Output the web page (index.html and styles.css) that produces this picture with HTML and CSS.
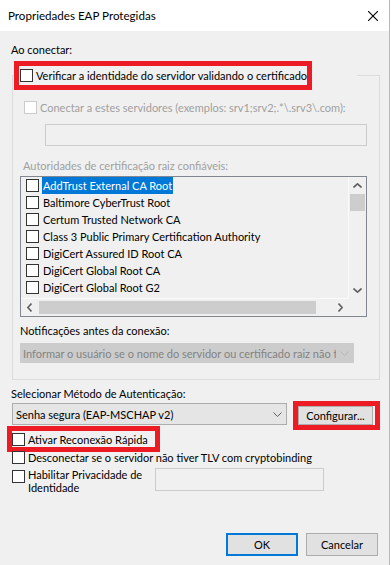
FILE: index.html
```html
<!DOCTYPE html>
<html lang="pt-BR">
<head>
    <meta charset="UTF-8">
    <title>Propriedades EAP Protegidas</title>
    <link rel="stylesheet" href="styles.css">
</head>
<body>
    <div class="dialog">
        <div class="titlebar">
            <span>Propriedades EAP Protegidas</span>
            <svg class="close" width="10" height="10" viewBox="0 0 10 10">
                <path d="M0 0L10 10M10 0L0 10" stroke="#000" stroke-width="1.1" fill="none"/>
            </svg>
        </div>

        <div class="content">
            <div class="label top-label">Ao conectar:</div>

            <fieldset class="group">
                <legend class="legend">
                    <div class="highlight verify">
                        <span class="check"></span>
                        <span>Verificar a identidade do servidor validando o certificado</span>
                    </div>
                </legend>

                <div class="check-row servers disabled">
                    <span class="check check-disabled"></span>
                    <span>Conectar a estes servidores (exemplos: srv1;srv2;.*\.srv3\.com):</span>
                </div>
                <div class="textbox servers-input"></div>

                <div class="label ca-label disabled">Autoridades de certificação raiz confiáveis:</div>
                <div class="listbox">
                    <div class="list-main">
                        <div class="list-items">
                            <div class="item"><span class="check"></span><span class="item-text selected">AddTrust External CA Root</span></div>
                            <div class="item"><span class="check"></span><span class="item-text">Baltimore CyberTrust Root</span></div>
                            <div class="item"><span class="check"></span><span class="item-text">Certum Trusted Network CA</span></div>
                            <div class="item"><span class="check"></span><span class="item-text">Class 3 Public Primary Certification Authority</span></div>
                            <div class="item"><span class="check"></span><span class="item-text">DigiCert Assured ID Root CA</span></div>
                            <div class="item"><span class="check"></span><span class="item-text">DigiCert Global Root CA</span></div>
                            <div class="item"><span class="check"></span><span class="item-text">DigiCert Global Root G2</span></div>
                        </div>
                        <div class="vscroll">
                            <div class="arrow"><svg width="9" height="5" viewBox="0 0 9 5"><polyline points="0.5,4.5 4.5,0.8 8.5,4.5" fill="none" stroke="#606060" stroke-width="1.6"/></svg></div>
                            <div class="vthumb"></div>
                            <div class="spacer"></div>
                            <div class="arrow"><svg width="9" height="5" viewBox="0 0 9 5"><polyline points="0.5,0.5 4.5,4.2 8.5,0.5" fill="none" stroke="#606060" stroke-width="1.6"/></svg></div>
                        </div>
                    </div>
                    <div class="hscroll">
                        <div class="arrow"><svg width="5" height="9" viewBox="0 0 5 9"><polyline points="4.5,0.5 0.8,4.5 4.5,8.5" fill="none" stroke="#606060" stroke-width="1.6"/></svg></div>
                        <div class="hthumb"></div>
                        <div class="spacer"></div>
                        <div class="arrow"><svg width="5" height="9" viewBox="0 0 5 9"><polyline points="0.5,0.5 4.2,4.5 0.5,8.5" fill="none" stroke="#606060" stroke-width="1.6"/></svg></div>
                        <div class="corner"></div>
                    </div>
                </div>

                <div class="label notify-label">Notificações antes da conexão:</div>
                <div class="combo combo-disabled">
                    <span class="combo-text">Informar o usuário se o nome do servidor ou certificado raiz não tiver</span>
                    <span class="chevron"><svg width="9" height="5" viewBox="0 0 9 5"><polyline points="0.5,0.5 4.5,4.5 8.5,0.5" fill="none" stroke="#b5b5b5" stroke-width="1"/></svg></span>
                </div>
            </fieldset>

            <div class="label method-label">Selecionar Método de Autenticação:</div>
            <div class="method-row">
                <div class="combo method-combo">
                    <span class="combo-text">Senha segura (EAP-MSCHAP v2)</span>
                    <span class="chevron"><svg width="9" height="5" viewBox="0 0 9 5"><polyline points="0.5,0.5 4.5,4.5 8.5,0.5" fill="none" stroke="#606060" stroke-width="1"/></svg></span>
                </div>
                <div class="highlight config-box">
                    <button class="button config">Configurar...</button>
                </div>
            </div>

            <div class="highlight fast">
                <span class="check"></span>
                <span>Ativar Reconexão Rápida</span>
            </div>
            <div class="check-row disconnect">
                <span class="check"></span>
                <span>Desconectar se o servidor não tiver TLV com cryptobinding</span>
            </div>
            <div class="privacy">
                <span class="check"></span>
                <span class="privacy-label">Habilitar Privacidade de<br>Identidade</span>
                <div class="textbox privacy-input"></div>
            </div>

            <div class="buttons">
                <button class="button default">OK</button>
                <button class="button">Cancelar</button>
            </div>
        </div>
    </div>
</body>
</html>
```
FILE: styles.css
```css
body {
    margin: 0;
    background-color: #fff;
    font-family: Lato, "Noto Sans", sans-serif;
    font-size: 11px;
    color: #000;
}
.dialog {
    width: 389px;
    height: 565px;
    border-right: 1px solid #a9bbd3;
    background-color: #f0f0f0;
    display: flex;
    flex-direction: column;
    overflow: hidden;
}
.titlebar {
    height: 31px;
    flex: none;
    background-color: #fff;
    display: flex;
    align-items: center;
    justify-content: space-between;
    padding: 0 11px 0 8px;
    font-size: 11.6px;
}
.content {
    flex: 1;
}
.label {
    height: 15px;
    line-height: 15px;
    white-space: nowrap;
}
.disabled {
    color: #a0a0a0;
}
.top-label {
    margin: 11px 0 0 11px;
}
.group {
    margin: 4px 0 0 12px;
    width: 368px;
    box-sizing: border-box;
    border: 1px solid #dcdcdc;
    padding: 0 0 16px 0;
    min-inline-size: 0;
}
.legend {
    padding: 0;
    margin-left: 1px;
    width: 343px;
}
.highlight {
    border: 5px solid #ed1c24;
    box-sizing: border-box;
    display: flex;
    align-items: center;
    white-space: nowrap;
}
.verify {
    width: 298px;
    height: 29px;
    padding-left: 1px;
    gap: 3px;
}
.check {
    width: 13px;
    height: 13px;
    box-sizing: border-box;
    border: 1px solid #333;
    background-color: #fff;
    flex: none;
}
.check-disabled {
    border-color: #cccccc;
}
.check-row {
    display: flex;
    align-items: center;
    height: 15px;
    gap: 3px;
    white-space: nowrap;
}
.servers {
    margin: 10px 0 0 11px;
}
.textbox {
    height: 22px;
    box-sizing: border-box;
    border: 1px solid #cccccc;
}
.servers-input {
    margin: 9px 0 0 32px;
    width: 322px;
}
.ca-label {
    margin: 12px 0 0 10px;
}
.listbox {
    margin: 3px 0 0 7px;
    width: 347px;
    height: 141px;
    box-sizing: border-box;
    border: 1px solid #828790;
    display: flex;
    flex-direction: column;
}
.list-main {
    flex: 1;
    min-height: 0;
    display: flex;
}
.list-items {
    flex: 1;
    overflow: hidden;
    padding-left: 5px;
    border-right: 1px solid #fafafa;
    border-bottom: 1px solid #fafafa;
}
.item {
    height: 17px;
    display: flex;
    align-items: center;
    gap: 3px;
    white-space: nowrap;
}
.item-text {
    padding: 0 1px;
    line-height: 17px;
}
.selected {
    background-color: #0078d7;
    color: #fff;
}
.vscroll {
    width: 17px;
    display: flex;
    flex-direction: column;
}
.arrow {
    width: 17px;
    height: 17px;
    flex: none;
    display: flex;
    align-items: center;
    justify-content: center;
}
.vthumb {
    height: 17px;
    width: 15px;
    margin-left: 1px;
    background-color: #cdcdcd;
}
.spacer {
    flex: 1;
}
.hscroll {
    height: 17px;
    flex: none;
    display: flex;
    align-items: center;
}
.hthumb {
    width: 277px;
    height: 13px;
    margin-left: 1px;
    background-color: #cdcdcd;
}
.corner {
    width: 17px;
    height: 17px;
}
.notify-label {
    margin: 6px 0 0 7px;
}
.combo {
    box-sizing: border-box;
    display: flex;
    align-items: center;
    overflow: hidden;
    white-space: nowrap;
}
.combo-text {
    flex: 1;
    overflow: hidden;
}
.chevron {
    width: 17px;
    flex: none;
    display: flex;
    justify-content: center;
}
.combo-disabled {
    margin: 5px 0 0 7px;
    width: 334px;
    height: 20px;
    background-color: #cccccc;
    border: 1px solid #cccccc;
    color: #838383;
    padding-left: 2px;
}
.method-label {
    margin: 6px 0 0 11px;
}
.method-row {
    display: flex;
    align-items: flex-start;
    gap: 6px;
    margin-left: 12px;
}
.method-combo {
    width: 275px;
    height: 22px;
    margin-top: 2px;
    background-color: #e5e5e5;
    border: 1px solid #adadad;
    padding-left: 3px;
}
.config-box {
    padding-right: 2px;
}
.button {
    font-family: inherit;
    font-size: inherit;
    color: #000;
    background-color: #e1e1e1;
    border: 1px solid #adadad;
    border-radius: 0;
    padding: 0;
    margin: 0;
    height: 23px;
    width: 72px;
    box-sizing: border-box;
}
.config {
    width: 75px;
    height: 19px;
}
.default {
    border: 2px solid #0078d7;
}
.fast {
    margin: -4px 0 0 7px;
    width: 153px;
    height: 26px;
    gap: 3px;
}
.disconnect {
    margin: -2px 0 0 12px;
}
.privacy {
    display: flex;
    align-items: flex-start;
    margin: 3px 0 0 12px;
}
.privacy .check {
    margin-top: 2px;
}
.privacy-label {
    width: 127px;
    flex: none;
    margin-left: 3px;
    line-height: 13px;
    white-space: nowrap;
}
.privacy-input {
    width: 169px;
    height: 23px;
}
.buttons {
    display: flex;
    justify-content: flex-end;
    gap: 8px;
    margin-top: 39px;
    padding-right: 11px;
}
```
